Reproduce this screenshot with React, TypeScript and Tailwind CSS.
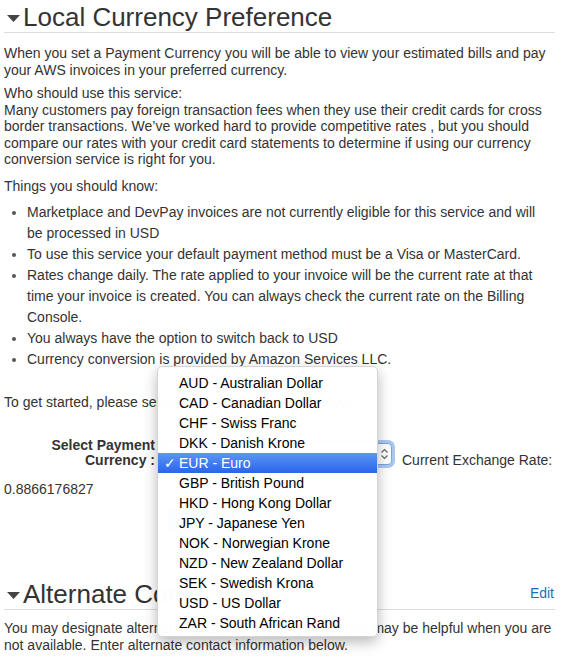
import React from 'react';

const CURRENCIES = [
  'AUD - Australian Dollar',
  'CAD - Canadian Dollar',
  'CHF - Swiss Franc',
  'DKK - Danish Krone',
  'EUR - Euro',
  'GBP - British Pound',
  'HKD - Hong Kong Dollar',
  'JPY - Japanese Yen',
  'NOK - Norwegian Krone',
  'NZD - New Zealand Dollar',
  'SEK - Swedish Krona',
  'USD - US Dollar',
  'ZAR - South African Rand',
];

const Caret = () => (
  <svg width="13" height="7" viewBox="0 0 13 7" className="mr-[3px] mb-[10px] shrink-0">
    <path d="M0 0 L13 0 L6.5 7 Z" fill="#444" />
  </svg>
);

const SectionHeading = ({ title, edit }: { title: string; edit?: boolean }) => (
  <div className="flex items-end border-b border-[#dcdcdc] h-[30px] pl-[3px]">
    <Caret />
    <h2 className="text-[26px] leading-[30px] text-[#333] whitespace-nowrap">{title}</h2>
    {edit && <a className="ml-auto mb-[5px] mr-[1px] text-[14px] text-[#1a6fb8]">Edit</a>}
  </div>
);

export default function App() {
  const selected = 'EUR - Euro';
  return (
    <div className="relative w-[572px] h-[663px] overflow-hidden bg-white font-['Liberation_Sans',Arial,sans-serif] text-[14px] text-[#333]">
      <div className="w-[551px] ml-[4px] pt-[3px]">
        <SectionHeading title="Local Currency Preference" />

        <p className="mt-[12px] leading-[17px]">
          When you set a Payment Currency you will be able to view your estimated bills and pay your AWS invoices in your preferred currency.
        </p>
        <p className="mt-[6px] leading-[16.5px]">
          Who should use this service:
          <br />
          Many customers pay foreign transaction fees when they use their credit cards for cross border transactions. We’ve worked hard to provide competitive rates , but you should compare our rates with your credit card statements to determine if using our currency conversion service is right for you.
        </p>

        <p className="mt-[10px] leading-[17px]">Things you should know:</p>
        <ul className="mt-[7px] pl-[23px] leading-[21px] list-disc marker:text-[#555] pr-[10px]">
          <li>Marketplace and DevPay invoices are not currently eligible for this service and will be processed in USD</li>
          <li>To use this service your default payment method must be a Visa or MasterCard.</li>
          <li>Rates change daily. The rate applied to your invoice will be the current rate at that time your invoice is created. You can always check the current rate on the Billing Console.</li>
          <li>You always have the option to switch back to USD</li>
          <li>Currency conversion is provided by Amazon Services LLC.</li>
        </ul>

        <p className="mt-[24px] leading-[17px]">To get started, please select a Payment Currency below.</p>

        <div className="mt-[27px] flex items-start">
          <div className="w-[151px] shrink-0 text-right font-bold leading-[15px] text-[#333]">
            Select Payment
            <br />
            Currency :
          </div>
          <div className="ml-[6px] mt-[5px] w-[231px] shrink-0 h-[22px] rounded-[4px] border border-[#7aa7e0] ring-[3px] ring-[#a9c8f0] bg-white flex items-center justify-end pr-[3px]">
            <svg width="7" height="12" viewBox="0 0 7 12">
              <path d="M0.5 4.5 L3.5 1.5 L6.5 4.5 M0.5 7.5 L3.5 10.5 L6.5 7.5" stroke="#666" strokeWidth="1.2" fill="none" />
            </svg>
          </div>
          <div className="ml-[10px] mt-[14px] leading-[17px] whitespace-nowrap">Current Exchange Rate:</div>
        </div>
        <div className="mt-[12px] leading-[17px]">0.8866176827</div>

        <div className="mt-[11px] ml-[164px] w-[79px] h-[25px] rounded-[3px] bg-[#2a7be0] text-white text-[13px] flex items-center justify-center">
          Save
        </div>

        <div className="mt-[46px]">
          <SectionHeading title="Alternate Contacts" edit />
        </div>
        <p className="mt-[10px] leading-[17px]">
          You may designate alternate contacts for your account that may be helpful when you are not available. Enter alternate contact information below.
        </p>
      </div>

      {/* open currency menu */}
      <div className="absolute left-[157px] top-[366px] w-[221px] rounded-[5px] border border-[#d4d4d4] bg-white/[0.985] pt-[6px] pb-[3px] shadow-[0_5px_14px_rgba(0,0,0,0.28)] text-black">
        {CURRENCIES.map((c) => {
          const on = c === selected;
          return (
            <div
              key={c}
              className={`relative h-[20px] leading-[20px] pl-[21px] whitespace-nowrap ${on ? 'bg-linear-to-b from-[#5c95f6] to-[#2a64e9] text-white' : ''}`}
            >
              {on && <span className="absolute left-[6px] top-0 font-['DejaVu_Sans',sans-serif] font-bold text-[14px]">✓</span>}
              {c}
            </div>
          );
        })}
      </div>
    </div>
  );
}
